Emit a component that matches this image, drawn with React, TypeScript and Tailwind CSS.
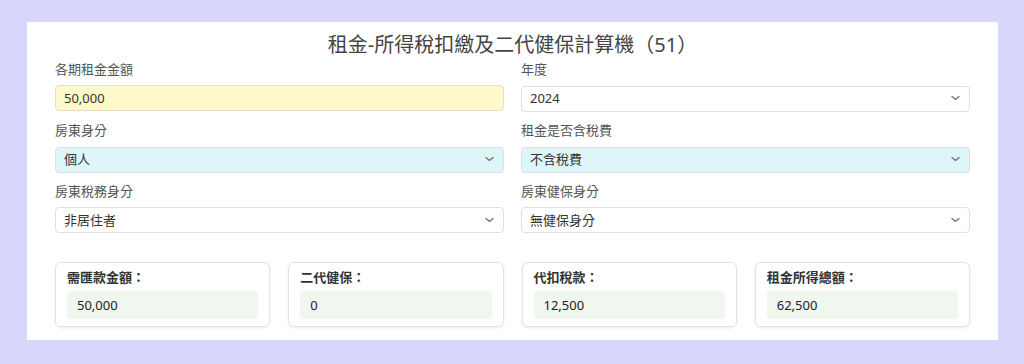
import React from 'react';

const Chevron = () => (
    <svg width="9" height="5" viewBox="0 0 9 5" className="pointer-events-none absolute right-[10px] top-1/2 -translate-y-1/2">
        <polyline points="1,1 4.5,4 8,1" fill="none" stroke="#777" strokeWidth="1.4" strokeLinecap="round" strokeLinejoin="round" />
    </svg>
);

interface SelectFieldProps {
    label: string;
    value: string;
    options: string[];
    tint?: string;
}

const SelectField: React.FC<SelectFieldProps> = ({ label, value, options, tint }) => (
    <div className="flex flex-col">
        <label className="text-[13px] leading-[18px] text-[#555] mb-[7px]">{label}</label>
        <div className="relative">
            <select
                defaultValue={value}
                className={`appearance-none w-full h-[26px] rounded-[4px] border border-[#dcdfe3] px-[8px] text-[13px] text-[#333] outline-none ${tint ?? 'bg-white'}`}
            >
                {options.map(o => (
                    <option key={o} value={o}>{o}</option>
                ))}
            </select>
            <Chevron />
        </div>
    </div>
);

const results = [
    { label: '需匯款金額：', value: '50,000' },
    { label: '二代健保：', value: '0' },
    { label: '代扣稅款：', value: '12,500' },
    { label: '租金所得總額：', value: '62,500' },
];

export default function App() {
    return (
        <div className="min-h-[364px] bg-[#d8d6fb] pl-[27px] pt-[22px] pb-[24px] font-['Noto_Sans','Noto_Sans_CJK_TC',sans-serif]">
            <div className="w-[971px] bg-white px-[28px] pb-[13px]">
                <h1 className="text-center text-[20px] leading-[30px] pt-[8px] text-[#444]">租金-所得稅扣繳及二代健保計算機（51）</h1>

                <div className="grid grid-cols-2 gap-x-[17px] gap-y-[9px]">
                    <div className="flex flex-col">
                        <label className="text-[13px] leading-[18px] text-[#555] mb-[7px]">各期租金金額</label>
                        <input
                            defaultValue="50,000"
                            className="w-full h-[26px] rounded-[4px] border border-[#e4e0c4] bg-[#fef9cb] px-[8px] text-[13px] text-[#333] outline-none"
                        />
                    </div>
                    <SelectField label="年度" value="2024" options={['2024', '2023', '2022']} />
                    <SelectField label="房東身分" value="個人" options={['個人', '公司']} tint="bg-[#dff6f8]" />
                    <SelectField label="租金是否含稅費" value="不含稅費" options={['不含稅費', '含稅費']} tint="bg-[#dff6f8]" />
                    <SelectField label="房東稅務身分" value="非居住者" options={['居住者', '非居住者']} />
                    <SelectField label="房東健保身分" value="無健保身分" options={['無健保身分', '有健保身分']} />
                </div>

                <div className="grid grid-cols-4 gap-x-[18px] mt-[29px]">
                    {results.map(r => (
                        <div key={r.label} className="rounded-[6px] border border-[#e2e2e2] shadow-[0_1px_3px_rgba(0,0,0,0.08)] px-[11px] pt-[5px] pb-[7px]">
                            <div className="text-[13px] leading-[18px] font-bold text-[#333] mb-[5px]">{r.label}</div>
                            <div className="h-[28px] rounded-[3px] bg-[#eff7ef] px-[10px] text-[13px] leading-[28px] text-[#222]">{r.value}</div>
                        </div>
                    ))}
                </div>
            </div>
        </div>
    );
}
